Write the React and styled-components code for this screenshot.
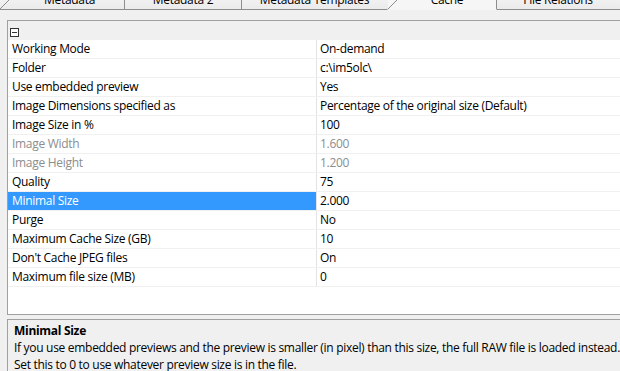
import React from "react";
import styled, { createGlobalStyle } from "styled-components";

const GlobalStyle = createGlobalStyle`
  body {
    margin: 0;
    background-color: #f0f0f0;
    overflow: hidden;
    font-family: "Open Sans", "Noto Sans", sans-serif;
    font-size: 12px;
    letter-spacing: -0.3px;
    color: #000000;
  }
`;

const Page = styled.div`
  width: 660px;
  display: flex;
  flex-direction: column;
`;

const TabStrip = styled.div`
  display: flex;
  height: 10px;
  overflow: hidden;
`;

const Tab = styled.div`
  position: relative;
  flex: 0 0 ${({ $w }) => $w}px;
  box-sizing: border-box;
  height: 18px;
  margin-top: -8px;
  padding-left: ${({ $padL }) => $padL || 0}px;
  padding-right: ${({ $padR }) => $padR || 0}px;
  line-height: 15px;
  text-align: center;
  white-space: nowrap;
  background: ${({ $active }) =>
    $active ? "#f6f6f6" : "linear-gradient(#f6f6f6, #ebebeb)"};
  border-right: 1px solid ${({ $noRight }) => ($noRight ? "transparent" : "#8d8d8d")};
  border-bottom: 1px solid ${({ $active }) => ($active ? "transparent" : "#8d8d8d")};

  &::before {
    content: "";
    display: ${({ $slant }) => ($slant ? "block" : "none")};
    position: absolute;
    left: 0;
    bottom: 0;
    width: 10px;
    height: 10px;
    background: linear-gradient(
      to top left,
      transparent calc(50% - 0.7px),
      #8d8d8d 50%,
      transparent calc(50% + 0.7px)
    );
  }
`;

const Grid = styled.div`
  margin: 10px 0 0 7px;
  border: 1px solid #a0a0a0;
  height: 293px;
  display: flex;
  flex-direction: column;
  background-color: #ffffff;
`;

const Category = styled.div`
  height: 19px;
  flex: 0 0 19px;
  display: flex;
  align-items: center;
  padding-left: 2px;
  background-color: #f0f0f0;
`;

const Toggle = styled.div`
  width: 7px;
  height: 7px;
  border: 1px solid #333333;
  display: flex;
  align-items: center;
  justify-content: center;
  background-color: #ffffff;
  margin-top: 3px;

  &::after {
    content: "";
    width: 5px;
    height: 1px;
    background-color: #333333;
  }
`;

const Row = styled.div`
  display: flex;
  height: 19px;
  flex: 0 0 19px;
  box-sizing: border-box;
  border-bottom: 1px solid #f0f0f0;
`;

const Label = styled.div`
  flex: 0 0 309px;
  box-sizing: border-box;
  padding-left: 4px;
  line-height: 18px;
  white-space: nowrap;
  color: ${({ $selected, $disabled }) =>
    $selected ? "#ffffff" : $disabled ? "#8d8d8d" : "#000000"};
  background-color: ${({ $selected }) => ($selected ? "#3399ff" : "transparent")};
  border-right: 1px solid #e3e3e3;
`;

const Value = styled.div`
  flex: 1;
  padding-left: 3px;
  line-height: 18px;
  white-space: nowrap;
  color: ${({ $disabled }) => ($disabled ? "#8d8d8d" : "#000000")};
`;

const Description = styled.div`
  margin: 4px 0 0 7px;
  border: 1px solid #a0a0a0;
  padding: 2px 6px 10px;
  line-height: 17px;
  background-color: #f0f0f0;
`;

const DescTitle = styled.div`
  font-weight: bold;
`;

const DescText = styled.div`
  white-space: nowrap;
`;

const tabs = [
  { label: "Metadata", w: 125, padL: 15, slant: true },
  { label: "Metadata 2", w: 117 },
  { label: "Metadata Templates", w: 146, noRight: true },
  { label: "Cache", w: 109, padL: 10, slant: true, active: true },
  { label: "File Relations", w: 143, padR: 20 },
];

const rows = [
  ["Working Mode", "On-demand"],
  ["Folder", "c:\\im5olc\\"],
  ["Use embedded preview", "Yes"],
  ["Image Dimensions specified as", "Percentage of the original size (Default)"],
  ["Image Size in %", "100"],
  ["Image Width", "1.600", true],
  ["Image Height", "1.200", true],
  ["Quality", "75"],
  ["Minimal Size", "2.000"],
  ["Purge", "No"],
  ["Maximum Cache Size (GB)", "10"],
  ["Don't Cache JPEG files", "On"],
  ["Maximum file size (MB)", "0"],
];

const App = () => {
  const selected = "Minimal Size";
  return (
    <Page>
      <GlobalStyle />
      <TabStrip>
        {tabs.map((t) => (
          <Tab
            key={t.label}
            $w={t.w}
            $padL={t.padL}
            $padR={t.padR}
            $slant={t.slant}
            $active={t.active}
            $noRight={t.noRight}
          >
            {t.label}
          </Tab>
        ))}
      </TabStrip>
      <Grid>
        <Category>
          <Toggle />
        </Category>
        {rows.map(([name, value, disabled]) => (
          <Row key={name}>
            <Label $selected={name === selected} $disabled={disabled}>
              {name}
            </Label>
            <Value $disabled={disabled}>{value}</Value>
          </Row>
        ))}
      </Grid>
      <Description>
        <DescTitle>Minimal Size</DescTitle>
        <DescText>
          If you use embedded previews and the preview is smaller (in pixel) than this size, the
          full RAW file is loaded instead.
        </DescText>
        <DescText>Set this to 0 to use whatever preview size is in the file.</DescText>
      </Description>
    </Page>
  );
};

export default App;
